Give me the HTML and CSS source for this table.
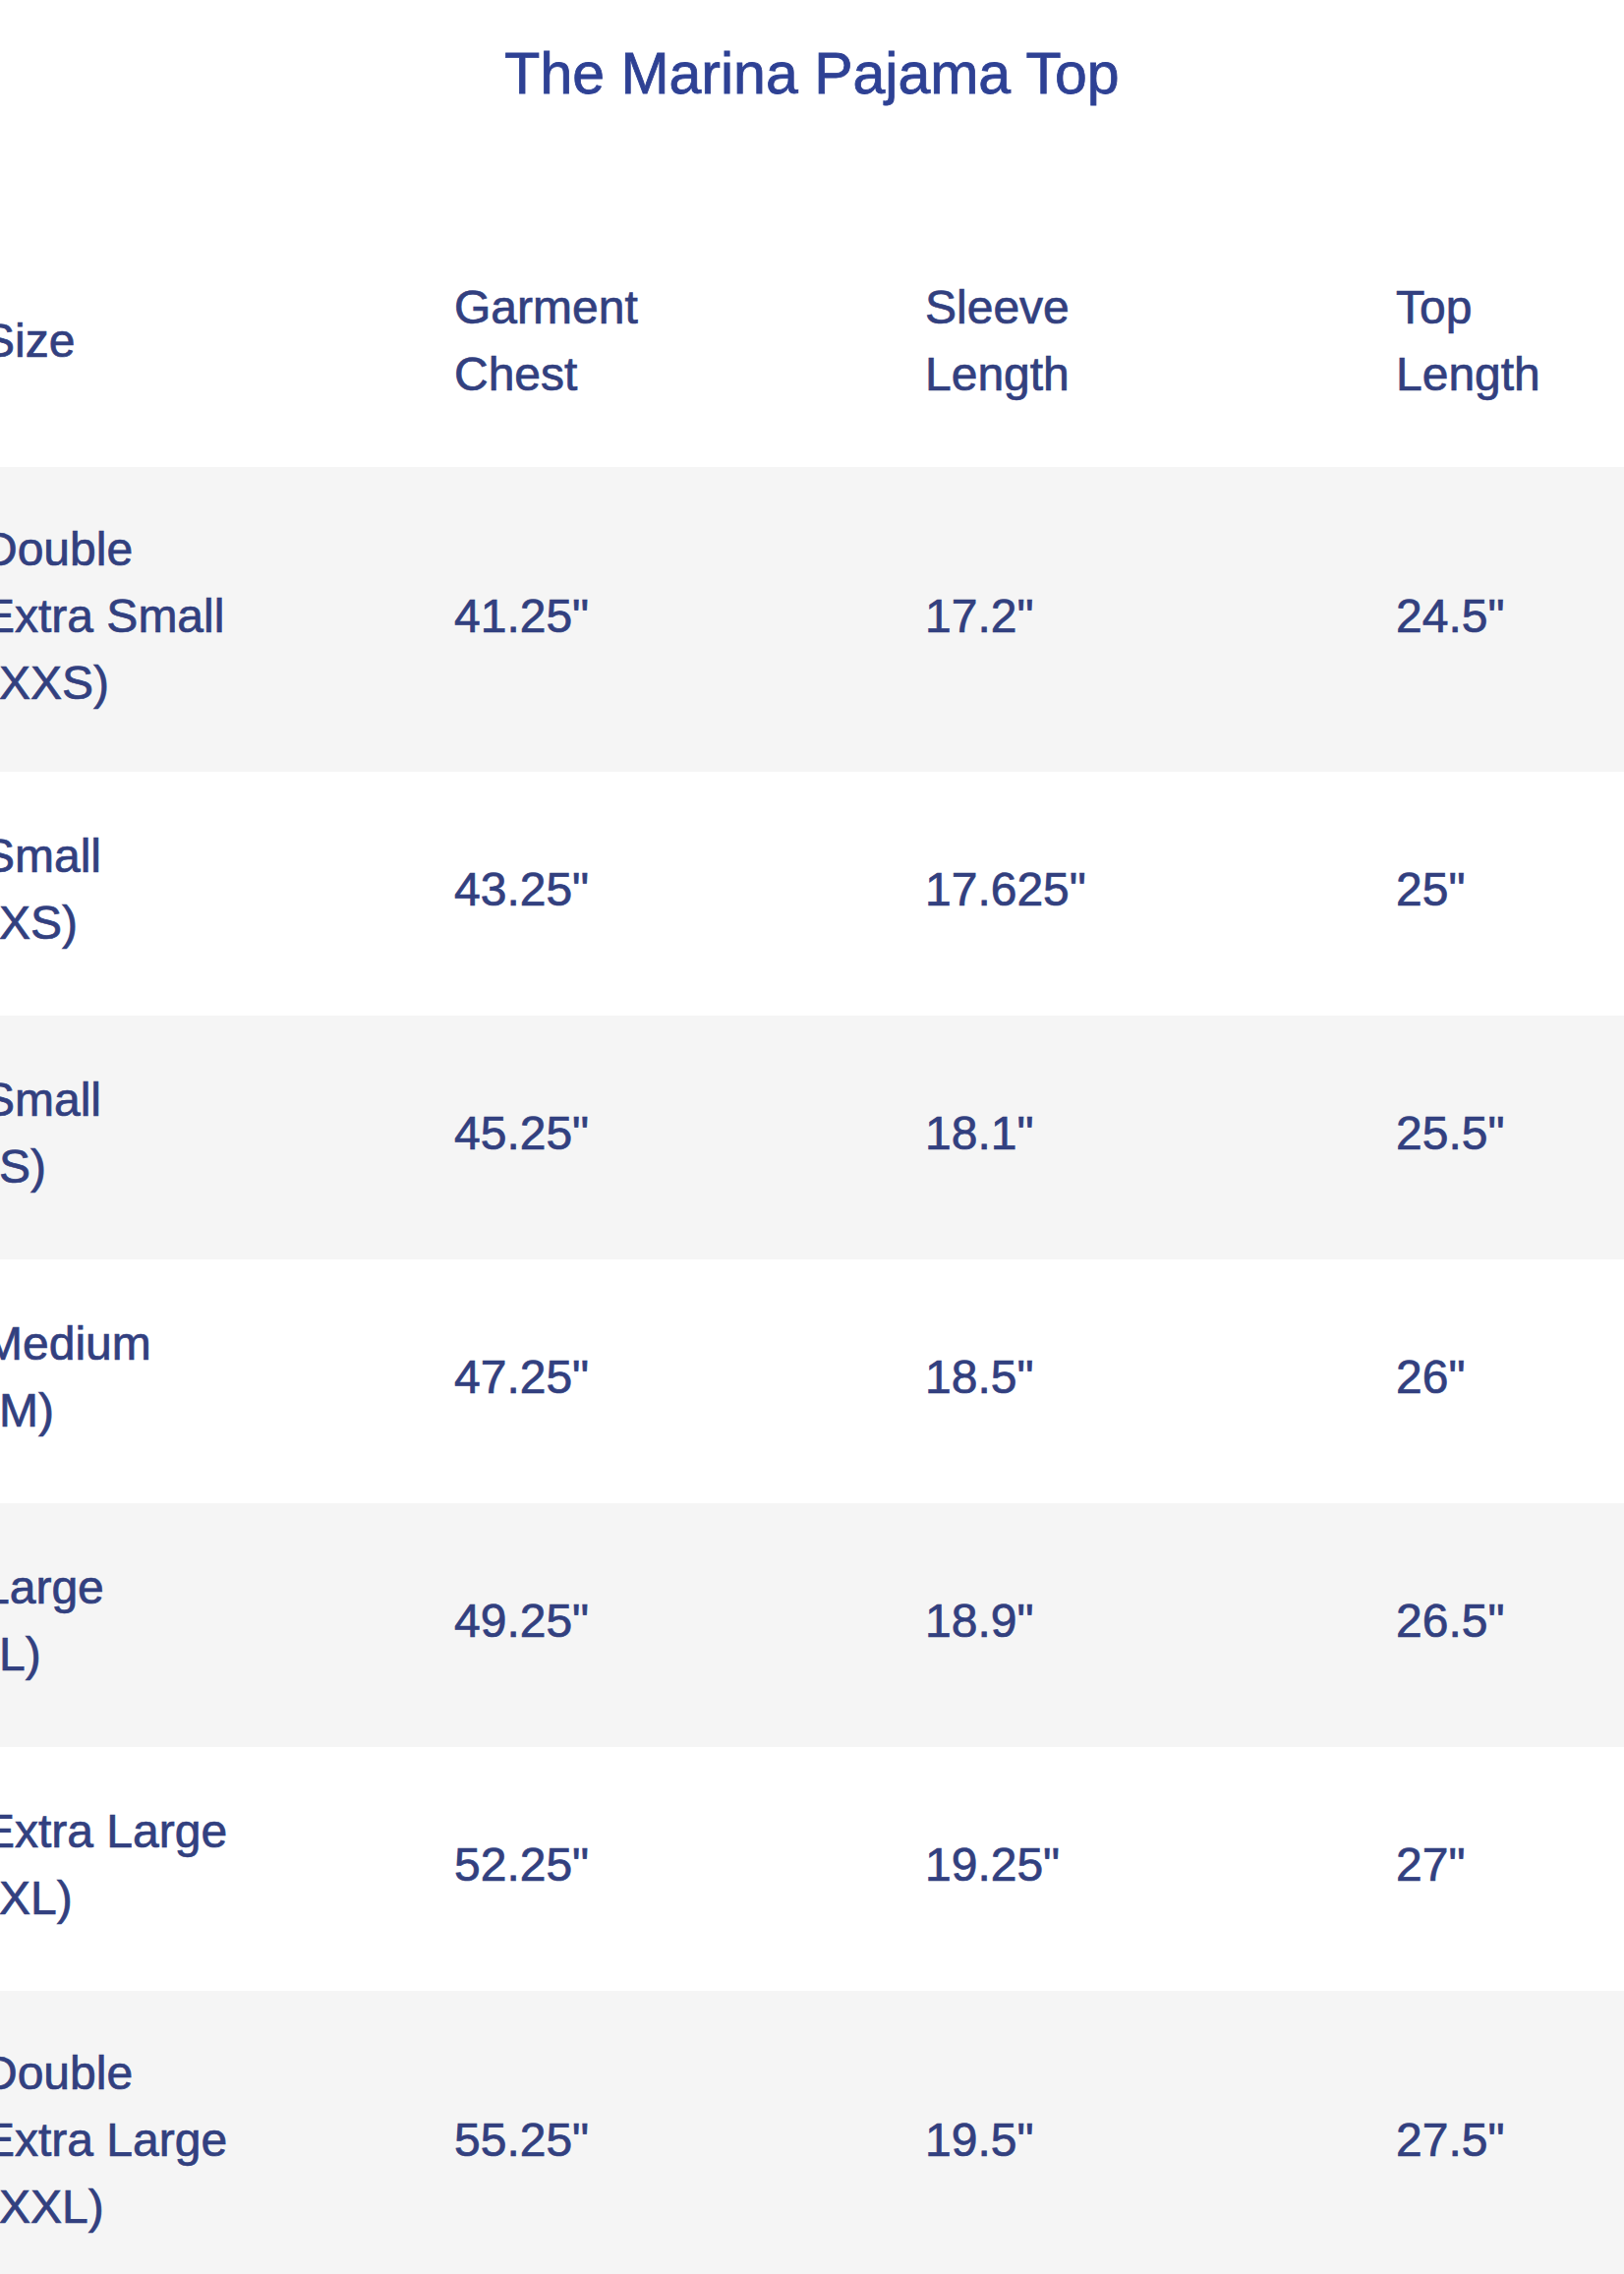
FILE: index.html
```html
<!DOCTYPE html>
<html lang="en">
<head>
<meta charset="utf-8">
<title>The Marina Pajama Top – Size Chart</title>
<link rel="stylesheet" href="styles.css">
</head>
<body>
<main class="page">
  <h1 class="title">The Marina Pajama Top</h1>
  <div class="table-wrap">
    <table class="size-table">
      <thead>
        <tr>
          <th>Size</th>
          <th>Garment<br>Chest</th>
          <th>Sleeve<br>Length</th>
          <th>Top<br>Length</th>
        </tr>
      </thead>
      <tbody>
        <tr class="shade tall">
          <td>Double<br>Extra Small<br>(XXS)</td>
          <td>41.25"</td>
          <td>17.2"</td>
          <td>24.5"</td>
        </tr>
        <tr>
          <td>Small<br>(XS)</td>
          <td>43.25"</td>
          <td>17.625"</td>
          <td>25"</td>
        </tr>
        <tr class="shade">
          <td>Small<br>(S)</td>
          <td>45.25"</td>
          <td>18.1"</td>
          <td>25.5"</td>
        </tr>
        <tr>
          <td>Medium<br>(M)</td>
          <td>47.25"</td>
          <td>18.5"</td>
          <td>26"</td>
        </tr>
        <tr class="shade">
          <td>Large<br>(L)</td>
          <td>49.25"</td>
          <td>18.9"</td>
          <td>26.5"</td>
        </tr>
        <tr>
          <td>Extra Large<br>(XL)</td>
          <td>52.25"</td>
          <td>19.25"</td>
          <td>27"</td>
        </tr>
        <tr class="shade tall">
          <td>Double<br>Extra Large<br>(XXL)</td>
          <td>55.25"</td>
          <td>19.5"</td>
          <td>27.5"</td>
        </tr>
      </tbody>
    </table>
  </div>
</main>
</body>
</html>
```

FILE: styles.css
```css
html, body {
  margin: 0;
  padding: 0;
  background: #ffffff;
}

.page {
  font-family: "Liberation Sans", Arial, sans-serif;
  overflow: hidden;
}

.title {
  margin: 42px 0 119px;
  text-align: center;
  font-size: 59px;
  line-height: 66px;
  font-weight: 400;
  color: #2e4194;
  -webkit-text-stroke: 0.8px #2e4194;
}

.table-wrap {
  overflow: hidden;
  width: 100%;
}

.size-table {
  margin-left: -17px;
  border-collapse: collapse;
  border-spacing: 0;
  table-layout: fixed;
  width: 1916px;
  color: #32407f;
  font-size: 48px;
  line-height: 68px;
}

.size-table th,
.size-table td {
  width: 479px;
  padding: 52px 0 60px;
  text-align: left;
  vertical-align: middle;
  font-weight: 400;
  -webkit-text-stroke: 0.7px #32407f;
}

.size-table tr.tall td {
  padding: 50px 0 56px;
}

.size-table tr.shade {
  background: #f5f5f5;
}
```
